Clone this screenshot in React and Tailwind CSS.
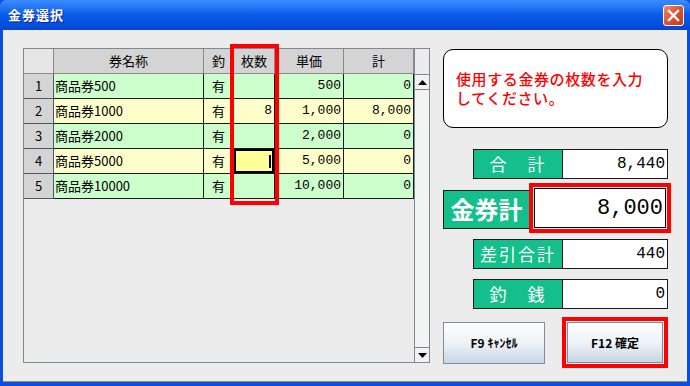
import React from 'react';

const rows = [
    { n: 1, name: '商品券500', qty: '', price: '500', total: '0', bg: 'bg-[#CCFFCC]' },
    { n: 2, name: '商品券1000', qty: '8', price: '1,000', total: '8,000', bg: 'bg-[#FFFFCC]' },
    { n: 3, name: '商品券2000', qty: '', price: '2,000', total: '0', bg: 'bg-[#CCFFCC]' },
    { n: 4, name: '商品券5000', qty: '', price: '5,000', total: '0', bg: 'bg-[#FFFFCC]', active: true },
    { n: 5, name: '商品券10000', qty: '', price: '10,000', total: '0', bg: 'bg-[#CCFFCC]' },
];

const jp = { fontFamily: '"Noto Sans CJK JP", "Noto Sans", sans-serif' };
const mono = { fontFamily: '"Liberation Mono", "Noto Sans CJK JP", monospace' };

function HeaderCell({ children, w }) {
    return (
        <div className={`${w} h-[25px] flex items-center justify-center bg-[#D4D4D4] border-r border-b border-[#8A8A8A] text-[13px] text-black`}>
            {children}
        </div>
    );
}

function Cell({ children, w, bg, align = 'right', font = mono, size = 'text-[13px]' }) {
    return (
        <div
            className={`${w} h-[25px] flex items-center ${align === 'right' ? 'justify-end pr-[2px]' : align === 'center' ? 'justify-center' : 'justify-start pl-[1px]'} ${bg} border-r border-b border-[#1A1A1A] ${size} text-black`}
            style={font}
        >
            {children}
        </div>
    );
}

function TotalRow({ label, value, className = '' }) {
    return (
        <div className={`flex h-[30px] ml-[30px] ${className}`}>
            <div className="w-[90px] flex items-center justify-center bg-[#14BF8B] border border-[#1A1A1A] text-white text-[17px] tracking-[2px]" style={jp}>
                {label}
            </div>
            <div className="w-[105px] flex items-center justify-end pr-[2px] bg-white border border-l-0 border-[#1A1A1A] text-[16px] text-black" style={mono}>
                {value}
            </div>
        </div>
    );
}

function XPButton({ children }) {
    return (
        <div className="w-full h-full flex items-center justify-center border border-[#7A8FA3] bg-gradient-to-b from-[#FFFFFF] via-[#EEF2F6] to-[#C9D6E3] text-[12px] font-bold text-black" style={jp}>
            {children}
        </div>
    );
}

export default function App() {
    return (
        <div className="w-[690px] h-[386px] flex flex-col overflow-hidden bg-[#0A4FE0]" style={jp}>
            {/* Title bar */}
            <div className="h-[30px] flex items-center justify-between pl-[8px] pr-[6px] rounded-t-[6px] bg-gradient-to-b from-[#3B8CFF] via-[#0A5BEA] to-[#0446D6]">
                <span className="text-white text-[13px] font-bold tracking-[1px] [text-shadow:1px_1px_0_#0A2A88]">金券選択</span>
                <div className="w-[21px] h-[21px] rounded-[3px] border border-white bg-gradient-to-br from-[#F08A6A] via-[#E0502E] to-[#C23A1A] flex items-center justify-center">
                    <svg width="13" height="13" viewBox="0 0 13 13">
                        <path d="M2 2 L11 11 M11 2 L2 11" stroke="white" strokeWidth="2.4" strokeLinecap="square" />
                    </svg>
                </div>
            </div>

            {/* Body */}
            <div className="flex-1 flex mx-[3px] mb-[4px] bg-[#ECECEC] border-b border-[#9C8C70]">
                {/* Grid */}
                <div className="pl-[20px] pt-[18px]">
                    <div className="relative w-[407px] h-[315px] flex border border-[#7A8A99] bg-[#ECECEC]">
                        <div className="w-[390px] flex flex-col">
                            <div className="flex">
                                <div className="w-[30px] h-[25px] bg-[#E6E6E6] border-r border-b border-[#8A8A8A]" />
                                <HeaderCell w="w-[150px]">券名称</HeaderCell>
                                <HeaderCell w="w-[30px]">釣</HeaderCell>
                                <HeaderCell w="w-[41px]">枚数</HeaderCell>
                                <HeaderCell w="w-[69px]">単価</HeaderCell>
                                <HeaderCell w="w-[70px]">計</HeaderCell>
                            </div>
                            {rows.map((r) => (
                                <div key={r.n} className="flex">
                                    <div className="w-[30px] h-[25px] flex items-center justify-center bg-[#D4D4D4] border-r border-b border-[#4A5A6A] text-[13px] text-black" style={jp}>
                                        {r.n}
                                    </div>
                                    <Cell w="w-[150px]" bg={r.bg} align="left" font={jp}>{r.name}</Cell>
                                    <Cell w="w-[30px]" bg={r.bg} align="center" font={jp}>有</Cell>
                                    {r.active ? (
                                        <div className="w-[41px] h-[25px] border-r border-b border-[#1A1A1A] bg-[#FFFF99]">
                                            <div className="w-full h-full border-2 border-black flex items-center justify-end pr-[1px]">
                                                <span className="w-[2px] h-[13px] bg-black" />
                                            </div>
                                        </div>
                                    ) : (
                                        <Cell w="w-[41px]" bg={r.bg}>{r.qty}</Cell>
                                    )}
                                    <Cell w="w-[69px]" bg={r.bg}>{r.price}</Cell>
                                    <Cell w="w-[70px]" bg={r.bg}>{r.total}</Cell>
                                </div>
                            ))}
                        </div>

                        {/* Scrollbar */}
                        <div className="w-[15px] flex flex-col border-l border-[#7A8A99]">
                            <div className="h-[26px] bg-[#ECECEC] border-b border-[#7A8A99]" />
                            <div className="h-[15px] flex items-center justify-center bg-[#F2F2F2] border-b border-[#7A8A99]">
                                <svg width="9" height="5" viewBox="0 0 9 5"><path d="M4.5 0 L9 5 L0 5 Z" fill="#000" /></svg>
                            </div>
                            <div className="flex-1 bg-[#F3F3F1]" />
                            <div className="h-[15px] flex items-center justify-center bg-[#F2F2F2] border-t border-[#7A8A99]">
                                <svg width="9" height="5" viewBox="0 0 9 5"><path d="M0 0 L9 0 L4.5 5 Z" fill="#000" /></svg>
                            </div>
                        </div>

                        {/* Highlight over 枚数 column */}
                        <div className="absolute left-[206px] top-[-5px] w-[49px] h-[161px] border-4 border-[#FF0000] pointer-events-none" />
                    </div>
                </div>

                {/* Right panel */}
                <div className="ml-[13px] pt-[19px] w-[228px] flex flex-col">
                    <div className="w-[225px] h-[79px] rounded-[10px] border border-black bg-white pl-[12px] pt-[19px] text-[15px] leading-[19px] tracking-[0.6px] font-medium text-[#FF0000]">
                        <div>使用する金券の枚数を入力</div>
                        <div>してください。</div>
                    </div>

                    <TotalRow label="合　計" value="8,440" className="mt-[21px]" />

                    <div className="flex items-center h-[50px] mt-[4px]">
                        <div className="w-[87px] h-[39px] mt-[2px] flex items-center justify-center bg-[#14BF8B] border border-[#1A1A1A] text-white text-[24px] font-bold" style={jp}>
                            金券計
                        </div>
                        <div className="w-[142px] h-[50px] -ml-[1px] border-4 border-[#FF0000] p-[1px]">
                            <div className="w-full h-full flex items-center justify-end pr-[2px] bg-white border border-black text-[22px] text-black" style={mono}>
                                8,000
                            </div>
                        </div>
                    </div>

                    <TotalRow label="差引合計" value="440" className="mt-[6px]" />
                    <TotalRow label="釣　銭" value="0" className="mt-[10px]" />

                    <div className="flex items-center mt-[8px] h-[51px]">
                        <div className="w-[102px] h-[42px]">
                            <XPButton>F9 ｷｬﾝｾﾙ</XPButton>
                        </div>
                        <div className="w-[106px] h-[51px] ml-[17px] border-4 border-[#FF0000] p-[1px]">
                            <XPButton>F12 確定</XPButton>
                        </div>
                    </div>
                </div>
            </div>
        </div>
    );
}
